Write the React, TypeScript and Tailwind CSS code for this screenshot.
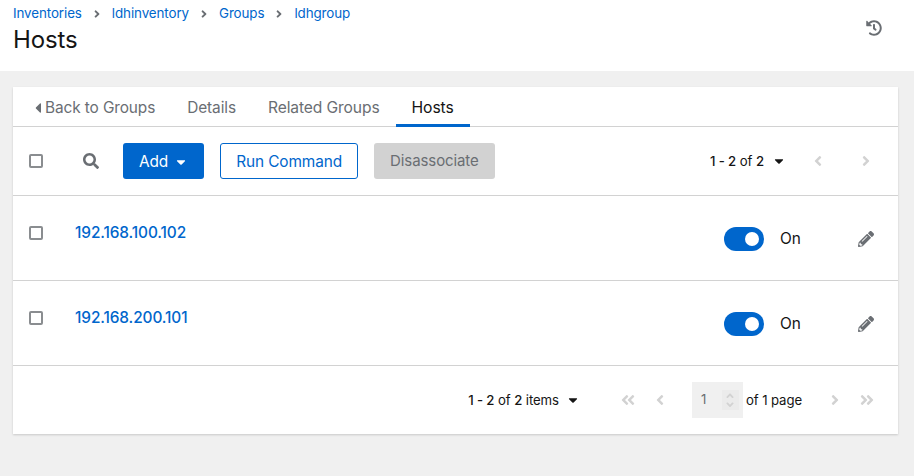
import React from 'react';
import {
  FaAngleDoubleLeft,
  FaAngleDoubleRight,
  FaAngleDown,
  FaAngleLeft,
  FaAngleRight,
  FaAngleUp,
  FaCaretDown,
  FaCaretLeft,
  FaHistory,
  FaPencilAlt,
  FaSearch,
} from 'react-icons/fa';

const crumbs = ['Inventories', 'ldhinventory', 'Groups', 'ldhgroup'];
const hosts = ['192.168.100.102', '192.168.200.101'];

const Checkbox = () => (
  <span className="block w-[14px] h-[14px] rounded-[2px] border-2 border-[#8a8d90] bg-white" />
);

const HostRow = ({ ip }: { ip: string }) => (
  <div className="flex h-[85px] border-b border-[#d2d2d2]">
    <div className="w-[62px] pl-4 pt-[30px]">
      <Checkbox />
    </div>
    <a className="mt-[25px] h-6 text-[#0066cc] font-medium leading-6">{ip}</a>
    <div className="ml-auto mr-[24px] flex items-center h-[85px]">
      <span className="flex items-center justify-end w-10 h-6 pr-[5px] rounded-full bg-[#0066cc]">
        <span className="w-[14px] h-[14px] rounded-full bg-white" />
      </span>
      <span className="ml-4 w-[22px] pt-px text-[#151515]">On</span>
      <FaPencilAlt className="ml-[56px] text-[#6a6e73] text-base" />
    </div>
  </div>
);

export default function App() {
  return (
    <div className="w-[914px] h-[476px] overflow-hidden bg-[#f0f0f0] font-['Inter','Liberation_Sans',sans-serif] text-[15.4px] tracking-[-0.1px]">
      <header className="flex justify-between h-[71px] bg-white pl-[13px] pr-[32px]">
        <div>
          <nav className="flex items-center h-[27px] text-[13.4px] text-[#0066cc]">
            {crumbs.map((crumb, index) => (
              <React.Fragment key={crumb}>
                {index > 0 && <FaAngleRight className="mx-[9px] text-[#6a6e73] text-xs" />}
                <a>{crumb}</a>
              </React.Fragment>
            ))}
          </nav>
          <h1 className="mt-[2px] text-[24px] leading-[22px] text-[#151515] font-normal">Hosts</h1>
        </div>
        <FaHistory className="mt-[20px] text-[#6a6e73] text-base" />
      </header>

      <main className="mx-[13px] mt-4 w-[885px] h-[347px] bg-white shadow-[0_1px_2px_rgba(3,3,3,0.16)]">
        <div className="flex h-[40px] border-b border-[#d2d2d2] text-[#6a6e73]">
          <a className="flex items-center pt-[3px] pl-[17px] pr-4">
            <FaCaretLeft className="text-base -mr-px" />
            Back to Groups
          </a>
          <a className="flex items-center pt-[3px] px-4">Details</a>
          <a className="flex items-center pt-[3px] px-4 text-[15.6px]">Related Groups</a>
          <a className="flex items-center pt-[5px] px-4 -mb-px border-b-[3px] border-[#0066cc] text-[#151515] text-[15.7px]">Hosts</a>
        </div>

        <div className="flex items-center h-[69px] border-b border-[#d2d2d2]">
          <div className="w-[70px] pl-4">
            <Checkbox />
          </div>
          <FaSearch className="text-[#6a6e73] text-base" />
          <button className="ml-[24px] flex items-center h-9 pt-px px-4 rounded-[3px] bg-[#0066cc] text-white">
            Add
            <FaCaretDown className="ml-[6px] text-sm" />
          </button>
          <button className="ml-4 h-9 pt-px px-[15px] rounded-[3px] border border-[#0066cc] text-[#0066cc]">Run Command</button>
          <button className="ml-4 h-9 pt-px px-4 rounded-[3px] bg-[#d2d2d2] text-[#6a6e73] text-[15px]">Disassociate</button>
          <div className="ml-auto flex items-center pr-[24px] text-[13.2px] text-[#151515]">
            <span className="pt-[2px]">
              <b className="font-medium">1 - 2</b> of <b className="font-medium">2</b>
            </span>
            <FaCaretDown className="ml-[8px] text-sm" />
            <FaAngleLeft className="ml-[24px] text-[#d2d2d2] text-base" />
            <FaAngleRight className="ml-[32px] text-[#d2d2d2] text-base" />
          </div>
        </div>

        {hosts.map((ip) => (
          <HostRow key={ip} ip={ip} />
        ))}

        <div className="flex items-center justify-end h-[68px] pr-[23px] text-[13.2px] text-[#151515]">
          <span className="pt-[2px]">
            <b className="font-medium">1 - 2</b> of <b className="font-medium">2</b> items
          </span>
          <FaCaretDown className="ml-[7px] text-sm" />
          <FaAngleDoubleLeft className="ml-[40px] text-[#d2d2d2] text-base" />
          <FaAngleLeft className="ml-[16px] text-[#d2d2d2] text-base" />
          <div className="ml-[24px] flex items-center justify-between w-[51px] h-9 pl-[9px] pr-1 bg-[#f0f0f0] text-[#6a6e73]">
            1
            <span className="flex flex-col items-center justify-center w-[17px] h-[20px] bg-[#ebebeb] text-[#d2d2d2] text-xs -space-y-[3px]">
              <FaAngleUp />
              <FaAngleDown />
            </span>
          </div>
          <span className="ml-[3px] pt-[2px]">of 1 page</span>
          <FaAngleRight className="ml-[25px] text-[#d2d2d2] text-base" />
          <FaAngleDoubleRight className="ml-[16px] text-[#d2d2d2] text-base" />
        </div>
      </main>
    </div>
  );
}
